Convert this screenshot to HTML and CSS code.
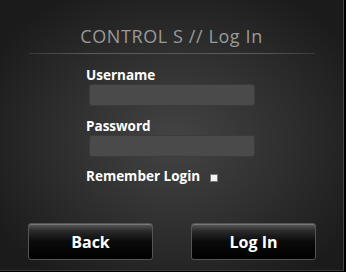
FILE: index.html
```html
<!DOCTYPE html>
<html>
<head>
<meta charset="utf-8">
<link rel="stylesheet" href="styles.css">
</head>
<body>
<div class="frame">
  <h1 class="title">CONTROL S // Log In</h1>
  <div class="rule"></div>
  <form class="form">
    <label class="label">Username</label>
    <div class="input"></div>
    <label class="label pw">Password</label>
    <div class="input"></div>
    <div class="remember">
      <span class="label">Remember Login</span>
      <span class="check"></span>
    </div>
  </form>
  <div class="buttons">
    <button class="btn" type="button">Back</button>
    <button class="btn" type="button">Log In</button>
  </div>
</div>
</body>
</html>
```
FILE: styles.css
```css
html, body {
  margin: 0;
  padding: 0;
  background: #000;
  width: 346px;
  height: 272px;
  overflow: hidden;
}
.frame {
  width: 343px;
  height: 270px;
  border-right: 1px solid #444;
  border-bottom: 1px solid #3a3a3a;
  background: radial-gradient(ellipse 210px 170px at 175px 140px, #444 0%, #2e2e2e 55%, #1b1b1b 100%);
  font-family: "Open Sans", "DejaVu Sans", sans-serif;
  display: flex;
  flex-direction: column;
  box-sizing: content-box;
}
.title {
  margin: 25px 0 0 0;
  font-size: 18px;
  font-weight: 400;
  letter-spacing: 0.6px;
  color: #9a9a9a;
  text-align: center;
  line-height: 23px;
  height: 23px;
}
.rule {
  margin: 5px 0 0 29px;
  width: 286px;
  height: 1px;
  background: linear-gradient(to right, #3a3a3a, #5a5a5a 20%, #5a5a5a 80%, #3a3a3a);
}
.form {
  margin: 0;
  padding: 12px 0 0 86px;
  display: flex;
  flex-direction: column;
  align-items: flex-start;
}
.label {
  color: #fff;
  font-weight: 700;
  font-size: 13.5px;
  line-height: 18px;
  height: 18px;
}
.input {
  margin: 0 0 0 3px;
  width: 164px;
  height: 20px;
  background: #4a4a4a;
  border: 1px solid #3b3b3b;
  border-radius: 3px;
}
.pw {
  margin-top: 11px;
}
.remember {
  margin-top: 10px;
  display: flex;
  align-items: center;
}
.check {
  margin: 4px 0 0 10px;
  width: 6px;
  height: 6px;
  background: #f4f4f4;
  border: 1px solid #777;
}
.buttons {
  margin: 38px 0 0 28px;
  display: flex;
  gap: 38px;
}
.btn {
  width: 125px;
  height: 37px;
  border: 1px solid #555;
  border-radius: 3px;
  background: linear-gradient(to bottom, #5a5a5a 0%, #2a2a2a 20%, #0a0a0a 50%, #000 100%);
  color: #fff;
  font-family: "Open Sans", "DejaVu Sans", sans-serif;
  font-weight: 700;
  font-size: 16px;
  padding: 0;
  box-shadow: inset 0 1px 0 #777;
}
```
